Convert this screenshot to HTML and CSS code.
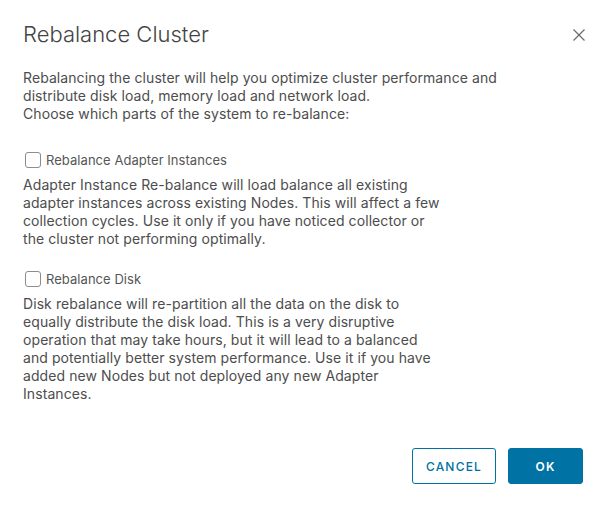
FILE: index.html
```html
<!DOCTYPE html>
<html>
<head>
<meta charset="utf-8">
<title>Rebalance Cluster</title>
<link rel="stylesheet" href="styles.css">
</head>
<body>
<div class="modal">
  <div class="modal-header">
    <h3 class="modal-title">Rebalance Cluster</h3>
    <button class="close" aria-label="Close">
      <svg width="12" height="12" viewBox="0 0 12 12"><path d="M0.5 0.5 L11.5 11.5 M11.5 0.5 L0.5 11.5" stroke="#6a6a6a" stroke-width="1.2" fill="none"/></svg>
    </button>
  </div>
  <div class="modal-body">
    <p class="intro">Rebalancing the cluster will help you optimize cluster performance and<br>distribute disk load, memory load and network load.<br>Choose which parts of the system to re-balance:</p>
    <label class="check first"><span class="box"></span><span class="label">Rebalance Adapter Instances</span></label>
    <p class="desc">Adapter Instance Re-balance will load balance all existing<br>adapter instances across existing Nodes. This will affect a few<br>collection cycles. Use it only if you have noticed collector or<br>the cluster not performing optimally.</p>
    <label class="check second"><span class="box"></span><span class="label">Rebalance Disk</span></label>
    <p class="desc">Disk rebalance will re-partition all the data on the disk to<br>equally distribute the disk load. This is a very disruptive<br>operation that may take hours, but it will lead to a balanced<br>and potentially better system performance. Use it if you have<br>added new Nodes but not deployed any new Adapter<br>Instances.</p>
  </div>
  <div class="modal-footer">
    <button class="btn btn-outline">CANCEL</button>
    <button class="btn btn-primary">OK</button>
  </div>
</div>
</body>
</html>
```
FILE: styles.css
```css
html, body {
  margin: 0;
  padding: 0;
  background: #fff;
}
body {
  font-family: Inter, "Open Sans", sans-serif;
  color: #4d4d4d;
}
.modal {
  padding: 20px 19px 0 23px;
}
.modal-header {
  display: flex;
  justify-content: space-between;
  align-items: center;
  height: 28px;
}
.modal-title {
  margin: 0;
  font-size: 22px;
  line-height: 28px;
  font-weight: 300;
  color: #444;
}
.close {
  border: 0;
  background: none;
  padding: 0;
  margin-right: -2px;
  width: 12px;
  height: 12px;
  display: flex;
  margin-top: 2px;
}
.modal-body {
  margin-top: 21px;
}
p {
  margin: 0;
  font-size: 14px;
  line-height: 18px;
  letter-spacing: 0.08px;
  white-space: nowrap;
}
.check {
  display: flex;
  align-items: center;
  gap: 5px;
  height: 18px;
  margin-left: 2px;
}
.check.first {
  margin-top: 28px;
  margin-bottom: 7px;
}
.check.second {
  margin-top: 22px;
  margin-bottom: 7px;
}
.box {
  width: 14px;
  height: 14px;
  border: 1px solid #8c8c8c;
  border-radius: 3px;
  background: #fff;
}
.label {
  font-size: 13px;
  line-height: 18px;
  letter-spacing: 0.05px;
  color: #565656;
}
.modal-footer {
  display: flex;
  justify-content: flex-end;
  gap: 12px;
  margin-top: 45px;
}
.btn {
  height: 36px;
  border-radius: 3px;
  font-family: Inter, "Open Sans", sans-serif;
  font-size: 12px;
  letter-spacing: 1.2px;
  padding: 0;
}
.btn-outline {
  width: 84px;
  background: #fff;
  border: 1px solid #0072a3;
  color: #0072a3;
  font-weight: 500;
}
.btn-primary {
  width: 75px;
  background: #0072a3;
  border: 1px solid #0072a3;
  color: #fff;
  font-weight: 600;
}
```
